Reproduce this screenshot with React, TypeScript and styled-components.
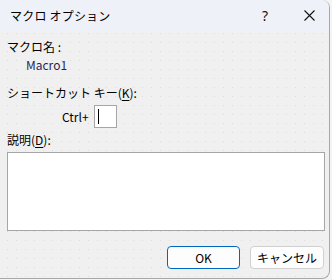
import React from "react";
import styled, { createGlobalStyle } from "styled-components";

const Global = createGlobalStyle`
  html, body { margin: 0; padding: 0; background: #f4f4f4; }
  body { font-family: "Noto Sans CJK JP", "Noto Sans", sans-serif; }
`;

const Window = styled.div`
  width: 330px;
  height: 279px;
  box-sizing: border-box;
  background-color: #f0f0f0;
  background-image: radial-gradient(circle, #dcdcdc 0.6px, transparent 0.9px);
  background-size: 9px 9px;
  background-position: 3px 2px;
  border-right: 1px solid #a8a8a8;
  border-bottom: 1px solid #a8a8a8;
  border-radius: 0 8px 8px 0;
  overflow: hidden;
  display: flex;
  flex-direction: column;
`;

const TitleBar = styled.div`
  height: 31px;
  flex: none;
  background: #eef2f8;
  display: flex;
  align-items: center;
  padding-left: 10px;
  font-size: 12px;
  color: #000;
`;

const Title = styled.div`
  flex: 1;
  letter-spacing: 0.2px;
`;

const TitleButton = styled.div<{ $w: number }>`
  width: ${(p) => p.$w}px;
  height: 31px;
  display: flex;
  align-items: center;
  justify-content: center;
  font-family: "Noto Sans", sans-serif;
  font-size: 14px;
  color: #111;
`;

const Body = styled.div`
  flex: 1;
  display: flex;
  flex-direction: column;
  padding: 8px 5px 0 7px;
`;

const Label = styled.div<{ $mt?: number; $pl?: number; $color?: string }>`
  font-size: 12px;
  line-height: 16px;
  height: 16px;
  color: ${(p) => p.$color || "#000"};
  margin-top: ${(p) => p.$mt || 0}px;
  padding-left: ${(p) => p.$pl || 0}px;
  white-space: nowrap;
`;

const U = styled.span`
  text-decoration: underline;
  text-underline-offset: 2px;
`;

const KeyRow = styled.div`
  display: flex;
  align-items: center;
  margin-top: 4px;
  padding-left: 55px;
  gap: 5px;
  height: 23px;
`;

const KeyBox = styled.div`
  width: 23px;
  height: 23px;
  box-sizing: border-box;
  background: #fff;
  border: 1px solid #a6a6a6;
  display: flex;
  align-items: center;
  padding-left: 3px;
`;

const Caret = styled.div`
  width: 1px;
  height: 15px;
  background: #000;
`;

const TextArea = styled.div`
  margin-top: 4px;
  width: 318px;
  height: 79px;
  box-sizing: border-box;
  background: #fff;
  border: 1px solid #a6a6a6;
`;

const ButtonRow = styled.div`
  display: flex;
  justify-content: flex-end;
  gap: 10px;
  margin-top: 15px;
`;

const Button = styled.div<{ $primary?: boolean; $w: number }>`
  width: ${(p) => p.$w}px;
  height: 23px;
  box-sizing: border-box;
  border-radius: 4px;
  background: #fdfdfd;
  border: ${(p) => (p.$primary ? "1.5px solid #0067c0" : "1px solid #d0d0d0")};
  display: flex;
  align-items: center;
  justify-content: center;
  font-size: 12px;
  color: #000;
`;

export default function App() {
  return (
    <>
      <Global />
      <Window>
        <TitleBar>
          <Title>マクロ オプション</Title>
          <TitleButton $w={48}>?</TitleButton>
          <TitleButton $w={40}>
            <svg width="11" height="11" viewBox="0 0 11 11">
              <path d="M0.5 0.5 L10.5 10.5 M10.5 0.5 L0.5 10.5" stroke="#111" strokeWidth="1.1" fill="none" />
            </svg>
          </TitleButton>
        </TitleBar>
        <Body>
          <Label>マクロ名 :</Label>
          <Label $mt={2} $pl={19} $color="#2a1f55">Macro1</Label>
          <Label $mt={12}>
            ショートカット キー(<U>K</U>):
          </Label>
          <KeyRow>
            <Label>Ctrl+</Label>
            <KeyBox>
              <Caret />
            </KeyBox>
          </KeyRow>
          <Label $mt={4}>
            説明(<U>D</U>):
          </Label>
          <TextArea />
          <ButtonRow>
            <Button $primary $w={73}>OK</Button>
            <Button $w={74}>キャンセル</Button>
          </ButtonRow>
        </Body>
      </Window>
    </>
  );
}
